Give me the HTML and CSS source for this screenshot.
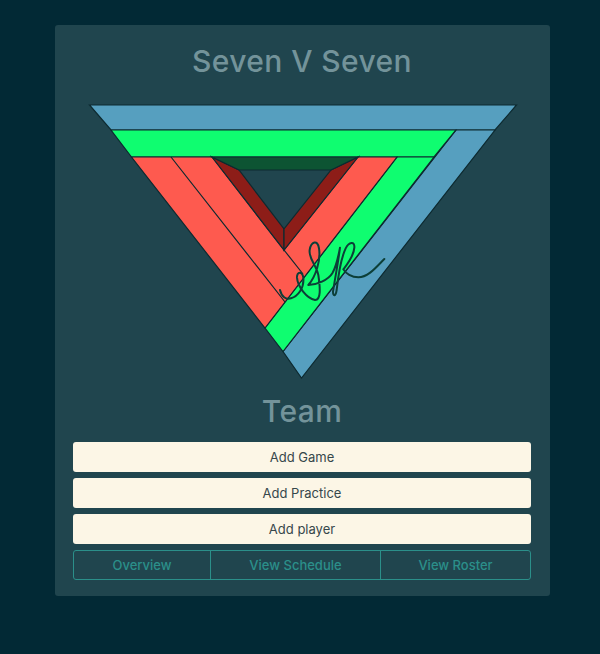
FILE: index.html
```html
<!DOCTYPE html>
<html lang="en">
<head>
<meta charset="utf-8">
<title>Seven V Seven</title>
<link rel="stylesheet" href="styles.css">
</head>
<body>
<main class="card">
  <h1 class="title">Seven V Seven</h1>
  <svg class="logo" viewBox="0 0 458 292" width="458" height="292" aria-label="Seven V Seven logo">
    <g transform="translate(-71 -96)" stroke="#0d2a30" stroke-width="1.2" stroke-linejoin="miter" stroke-miterlimit="10">
      <path class="sky" d="M89.5 105H516.5L495 130H111Z"/>
      <path class="sky" d="M456 130H495L301.5 378L283 351.5Z"/>
      <path class="mint" d="M111 130H456L434 157H131.5Z"/>
      <path class="mint" d="M397 157H434L283 351.5L265 328Z"/>
      <path class="coral" d="M131.5 157H212L284 250L358 157H397L265 328Z"/>
      <path class="maroon" d="M212 157L239 170L284 229V250Z"/>
      <path class="maroon" d="M358 157L331 170L284 229V250Z"/>
      <path class="forest" d="M212 157H358L331 170H239Z"/>
      <path class="rule" d="M171 157L285 302M284 250L303 274"/>
      <path class="sign" transform="translate(275 235) scale(.3333)" d="M15 165C20 185 32 195 48 190C68 184 88 160 85 128C82 108 65 108 66 128C68 155 95 190 120 195C138 196 136 160 130 120C124 90 100 70 104 45C108 20 128 12 132 40C138 75 122 125 100 150C125 150 160 135 172 115C185 92 190 65 195 38C190 80 180 130 174 170C174 185 182 185 185 165C190 120 198 70 212 40C222 20 240 18 238 38C236 65 215 90 205 103C212 115 230 127 250 127C280 127 305 95 328 72"/>
    </g>
  </svg>
  <h2 class="subtitle">Team</h2>
  <div class="actions">
    <button class="action">Add Game</button>
    <button class="action">Add Practice</button>
    <button class="action">Add player</button>
  </div>
  <nav class="tabs">
    <a class="tab">Overview</a>
    <a class="tab">View Schedule</a>
    <a class="tab">View Roster</a>
  </nav>
</main>
</body>
</html>
```
FILE: styles.css
```css
* { box-sizing: border-box; }
html, body { margin: 0; height: 100%; }
body {
  background: #022935;
  font-family: "Inter", "Noto Sans", sans-serif;
  padding: 25px 50px 58px 55px;
}
.card {
  width: 495px;
  height: 571px;
  background: #20454e;
  border-radius: 3px;
  padding: 0 19px 0 18px;
  display: flex;
  flex-direction: column;
}
.title, .subtitle {
  margin: 0;
  text-align: center;
  color: #73939a;
  font-family: "Inter", sans-serif;
  font-weight: 500;
  font-size: 30px;
  letter-spacing: 0.4px;
  line-height: 40px;
}
.title { padding-top: 16px; height: 71px; }
.logo { display: block; margin: 0 0 0 -2px; flex: none; }
.sky { fill: #569fbf; }
.mint { fill: #0ffd70; }
.coral { fill: #fe5a4f; }
.maroon { fill: #8d1d18; }
.forest { fill: #0d5433; }
.rule { fill: none; }
.sign { fill: none; stroke: #0c3f38; stroke-width: 6; stroke-linecap: round; stroke-linejoin: round; }
.subtitle { height: 44px; margin-top: 3px; margin-bottom: -2px; }
.actions { display: flex; flex-direction: column; gap: 6px; margin-top: 9px; }
.action {
  height: 30px;
  border: 0;
  border-radius: 3px;
  background: #fcf6e6;
  color: #36474b;
  font-family: inherit;
  font-size: 13px;
  padding: 0;
}
.tabs {
  display: grid;
  grid-template-columns: 136px 170px 1fr;
  height: 30px;
  margin-top: 6px;
  border: 1px solid #2b8f8a;
  border-radius: 3px;
}
.tab {
  display: flex;
  align-items: center;
  justify-content: center;
  color: #2b8f8a;
  font-size: 13px;
  font-weight: 500;
}
.tab + .tab { border-left: 1px solid #2b8f8a; }
```
